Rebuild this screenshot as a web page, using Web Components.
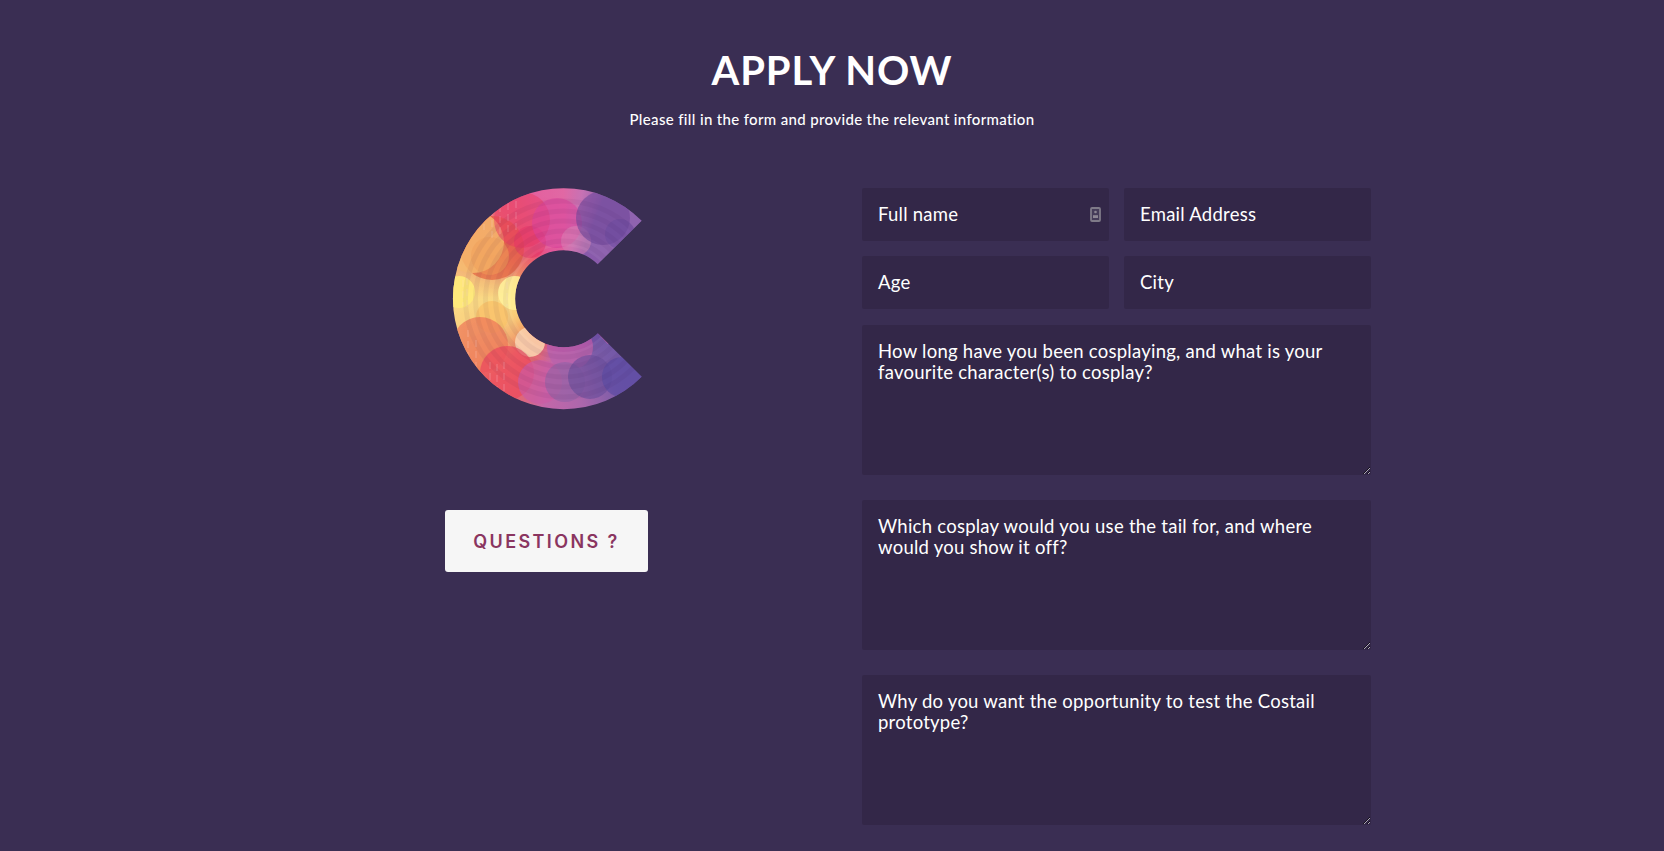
<!DOCTYPE html>
<html>
<head>
<meta charset="utf-8">
<title>Apply now</title>
<style>
  html, body { margin: 0; height: 100%; overflow: hidden; }
  body { background: #3a2e53; color: #fff; font-family: Lato, "Open Sans", sans-serif; }
</style>
</head>
<body>
<apply-page>
  <span slot="title">APPLY NOW</span>
  <span slot="lead">Please fill in the form and provide the relevant information</span>
  <costail-logo slot="logo"></costail-logo>
  <ask-button slot="aside">QUESTIONS ?</ask-button>
  <form-field slot="form" icon>Full name</form-field>
  <form-field slot="form">Email Address</form-field>
  <form-field slot="form">Age</form-field>
  <form-field slot="form">City</form-field>
  <form-field slot="form" multiline>How long have you been cosplaying, and what is your favourite character(s) to cosplay?</form-field>
  <form-field slot="form" multiline>Which cosplay would you use the tail for, and where would you show it off?</form-field>
  <form-field slot="form" multiline>Why do you want the opportunity to test the Costail prototype?</form-field>
</apply-page>

<script>
class ApplyPage extends HTMLElement {
  constructor() {
    super().attachShadow({ mode: "open" }).innerHTML = /*html*/ `
      <header>
        <h1><slot name="title"></slot></h1>
        <p><slot name="lead"></slot></p>
      </header>
      <main>
        <aside>
          <slot name="logo"></slot>
          <slot name="aside"></slot>
        </aside>
        <form><slot name="form"></slot></form>
      </main>
      <style>
        :host { display: block; }
        header { text-align: center; padding-top: 48px; height: 140px; box-sizing: border-box; }
        h1 { margin: 0; font-size: 40px; line-height: 44px; font-weight: 700; letter-spacing: .9px; }
        p { margin: 17px 0 0; font-size: 15px; line-height: 20px; font-weight: 500; letter-spacing: .35px; }
        main { display: flex; width: 926px; margin: 48px 0 0 445px; }
        aside { width: 417px; display: flex; flex-direction: column; align-items: flex-start; }
        form { width: 509px; display: grid; grid-template-columns: 247px 247px; gap: 15px; align-content: start; }
      </style>`;
  }
}

class CostailLogo extends HTMLElement {
  constructor() {
    super().attachShadow({ mode: "open" }).innerHTML = /*html*/ `
      <div class="ring">
        <div class="sweep"></div>
        <svg viewBox="0 0 230 250" width="230" height="250" aria-hidden="true">
          <!-- overlapping discs, read off the reference -->
          <circle cx="62" cy="78" r="32" fill="#e0502f" opacity=".6"/>
          <circle cx="43" cy="72" r="31" fill="#f6b868" opacity=".82"/>
          <circle cx="60" cy="86" r="19" fill="#f09a50" opacity=".5"/>
          <circle cx="92" cy="50" r="28" fill="#e8305a" opacity=".5"/>
          <circle cx="100" cy="72" r="16" fill="#e2275f" opacity=".45"/>
          <circle cx="127" cy="53" r="25" fill="#d93a98" opacity=".55"/>
          <circle cx="146" cy="71" r="15" fill="#d780b4" opacity=".5"/>
          <circle cx="173" cy="48" r="27" fill="#6b3f96" opacity=".62"/>
          <circle cx="190" cy="64" r="15" fill="#5f3f98" opacity=".45"/>
          <circle cx="29" cy="122" r="16" fill="#ffe974" opacity=".92"/>
          <circle cx="85" cy="123" r="17" fill="#fff296" opacity=".85"/>
          <circle cx="62" cy="147" r="16" fill="#f9bf60" opacity=".75"/>
          <circle cx="100" cy="172" r="15" fill="#f9d0ac" opacity=".9"/>
          <circle cx="50" cy="175" r="28" fill="#ee6f50" opacity=".7"/>
          <circle cx="77" cy="203" r="27" fill="#ea3c55" opacity=".68"/>
          <circle cx="110" cy="212" r="22" fill="#c9529f" opacity=".7"/>
          <circle cx="140" cy="177" r="23" fill="#b65aa8" opacity=".8"/>
          <circle cx="135" cy="212" r="20" fill="#8a5aa0" opacity=".6"/>
          <circle cx="160" cy="207" r="22" fill="#5f4496" opacity=".6"/>
          <circle cx="192" cy="207" r="20" fill="#503f9e" opacity=".6"/>
          <path d="M167.7 163.3L178 174 186 168 173 158Z" fill="#dd58a8"/>
          <!-- pale dashes over the reds -->
          <g fill="none" stroke="#ffd9e2" stroke-width=".7" stroke-dasharray="7 4" opacity=".4">
            <path d="M62 28V70M70 24V66M78 22V62M86 20V60M54 32V60"/>
            <path d="M60 192V226M67 194V232M74 192V236M38 160V192M46 170V200"/>
            <path d="M33 110V136M37 108V138M77 112V136"/>
          </g>
          <!-- concentric bands, lighter toward the rim -->
          <g fill="none" stroke="#fff" opacity=".055">
            <circle cx="133.5" cy="129" r="82" stroke-width="58"/>
            <circle cx="133.5" cy="129" r="87" stroke-width="48"/>
            <circle cx="133.5" cy="129" r="92" stroke-width="38"/>
            <circle cx="133.5" cy="129" r="97" stroke-width="28"/>
            <circle cx="133.5" cy="129" r="102" stroke-width="18"/>
            <circle cx="133.5" cy="129" r="106.500" stroke-width="9"/>
          </g>
          <g fill="none" stroke="#30103c" opacity=".05">
            <circle cx="133.5" cy="129" r="58" stroke-width="5"/>
            <circle cx="133.5" cy="129" r="68" stroke-width="5"/>
            <circle cx="133.5" cy="129" r="78" stroke-width="5"/>
            <circle cx="133.5" cy="129" r="88" stroke-width="5"/>
            <circle cx="133.5" cy="129" r="98" stroke-width="5"/>
          </g>
        </svg>
      </div>
      <style>
        :host { display: block; width: 230px; height: 250px; margin-left: -15px; margin-top: -18px; }
        .ring {
          display: grid;
          width: 230px;
          height: 250px;
          clip-path: path("M211.7 50.7A110.5 110.5 0 1 0 211.7 206.7L167.7 163.3A48.5 48.5 0 1 1 167.7 94.3Z");
        }
        .sweep, svg { grid-area: 1 / 1; }
        .sweep {
          background: conic-gradient(from 0deg at 133.5px 129px,
            #e0609f 0deg, #c46ab0 10deg, #8a5cab 22deg, #8a5cab 60deg,
            #6a50a3 130deg, #7553a3 150deg, #a85fa8 170deg, #c05fa5 190deg,
            #e2606c 205deg, #ee7660 220deg, #f3a868 235deg, #f9cb78 250deg,
            #fbd97e 270deg, #f5bd74 282deg, #ee8868 300deg, #ec6a6c 315deg,
            #e8557a 330deg, #e2589a 345deg, #e0609f 360deg);
        }
        svg { display: block; }
      </style>`;
  }
}

class AskButton extends HTMLElement {
  constructor() {
    super().attachShadow({ mode: "open" }).innerHTML = /*html*/ `
      <button type="button"><slot></slot></button>
      <style>
        :host { display: block; margin-top: 90px; }
        button {
          display: block;
          width: 203px;
          height: 62px;
          padding: 0;
          border: none;
          border-radius: 3px;
          background: #f6f6f6;
          color: #8a3560;
          font-family: Inter, Lato, sans-serif;
          font-size: 18px;
          font-weight: 600;
          letter-spacing: 2.4px;
        }
      </style>`;
  }
}

class FormField extends HTMLElement {
  constructor() {
    super();
    const multi = this.hasAttribute("multiline");
    this.attachShadow({ mode: "open" }).innerHTML = /*html*/ `
      ${multi ? `<textarea></textarea>` : `<input type="text">`}
      <label><slot></slot></label>
      ${this.hasAttribute("icon") ? `
      <svg viewBox="0 0 11 15" width="11" height="15" aria-hidden="true">
        <rect x="1" y="1" width="9" height="13" rx="1" fill="#453c58" stroke="#7f7a88" stroke-width="1.8"/>
        <circle cx="5.5" cy="5" r="1.3" fill="#8d8794"/>
        <path d="M3 11V8.2h5V11Z" fill="#8d8794"/>
      </svg>` : ""}
      <style>
        :host { display: block; position: relative; font-size: 18.5px; line-height: 21px; letter-spacing: .25px; color: #fff; }
        :host([multiline]) { grid-column: 1 / -1; margin: 1px 0 9px; }
        input, textarea {
          display: block;
          box-sizing: border-box;
          width: 100%;
          border: none;
          outline: none;
          border-radius: 2px;
          background: #332748;
          color: inherit;
          font: inherit;
          padding: 16px;
        }
        input { height: 53px; }
        textarea { height: 150px; }
        label { position: absolute; left: 16px; right: 16px; top: 16px; pointer-events: none; }
        svg { position: absolute; right: 8px; top: 19px; }
      </style>`;
    const control = this.shadowRoot.querySelector("input, textarea");
    const label = this.shadowRoot.querySelector("label");
    control.addEventListener("input", () => {
      label.hidden = control.value !== "";
    });
  }
}

customElements.define("apply-page", ApplyPage);
customElements.define("costail-logo", CostailLogo);
customElements.define("ask-button", AskButton);
customElements.define("form-field", FormField);
</script>
</body>
</html>
